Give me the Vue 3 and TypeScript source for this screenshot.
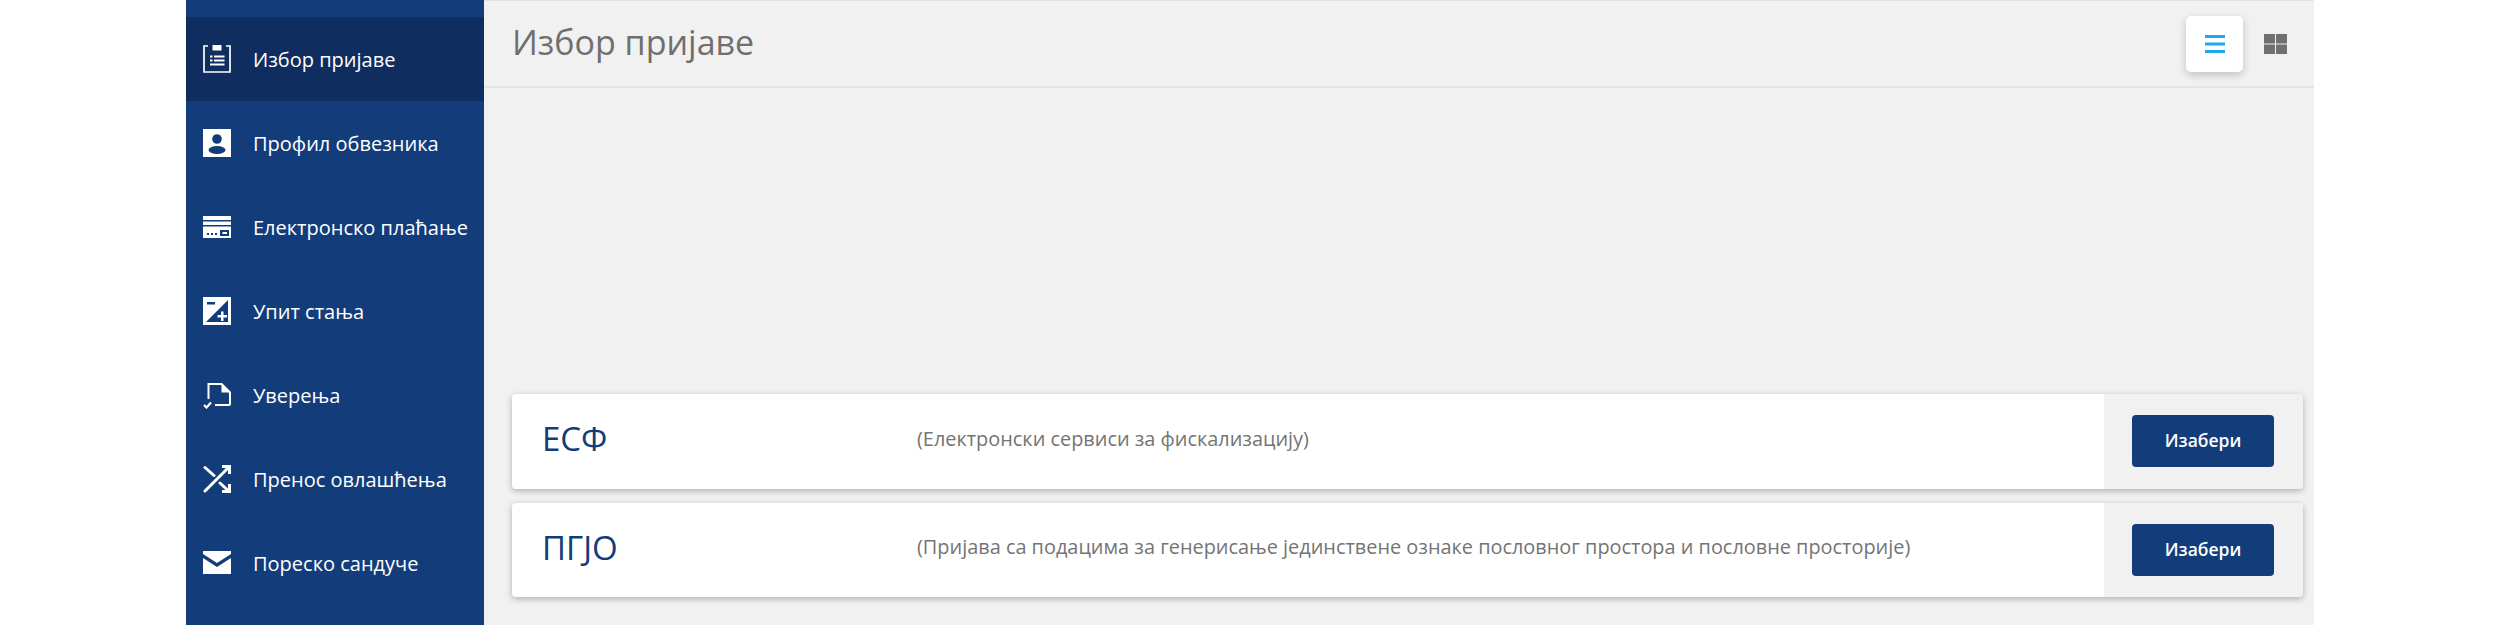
<template>
  <div class="page">
    <aside class="sidebar">
      <a v-for="item in navItems" :key="item.label" class="nav-item" :class="{ active: item.active }">
        <svg class="nav-icon" viewBox="0 0 28 28" v-html="item.icon"></svg>
        <span>{{ item.label }}</span>
      </a>
    </aside>
    <main class="main">
      <header class="topbar">
        <h1>Избор пријаве</h1>
        <div class="view-toggle">
          <button class="toggle-btn on" type="button">
            <svg width="20" height="18" viewBox="0 0 20 18"><path d="M0 0h20v3H0zM0 7.500h20v3H0zM0 15h20v3H0z" fill="#1ea7f2" /></svg>
          </button>
          <button class="toggle-btn" type="button">
            <svg width="23" height="20" viewBox="0 0 23 20"><path d="M0 0h11v9.500H0zM12 0h11v9.500H12zM0 10.500h11V20H0zM12 10.500h11V20H12z" fill="#6f6f6f" /></svg>
          </button>
        </div>
      </header>
      <section class="cards">
        <article v-for="card in cards" :key="card.name" class="card">
          <div class="card-name">{{ card.name }}</div>
          <div class="card-desc">{{ card.desc }}</div>
          <div class="card-action"><button type="button">Изабери</button></div>
        </article>
      </section>
    </main>
  </div>
</template>

<script setup lang="ts">
interface NavItem {
  label: string
  icon: string
  active?: boolean
}

const navItems: NavItem[] = [
  {
    label: 'Избор пријаве',
    active: true,
    icon: '<path fill="none" stroke="#fff" stroke-width="1.700" d="M5 1H1v26h26V1h-4"/><path fill="#fff" d="M9.500 0h9v5.500h-9zM7 10.500h2.500v2H7zM11 10.500h10.500v2H11zM7 14.500h2.500v2H7zM11 14.500h10.500v2H11zM7 18.500h14.500v2H7z"/>',
  },
  {
    label: 'Профил обвезника',
    icon: '<path fill="#fff" d="M0 0h28v28H0z"/><circle cx="14" cy="10" r="4.800" fill="#133d7a"/><ellipse cx="14" cy="21" rx="8.500" ry="4" fill="#133d7a"/>',
  },
  {
    label: 'Електронско плаћање',
    icon: '<path fill="#fff" d="M0 3h28v4H0zM0 8.500h28v3.500H0z"/><path fill="#fff" fill-rule="evenodd" d="M0 13.500h28V25H0zM17 17v6h9v-6z"/><path fill="#133d7a" d="M4 20h2v2H4zM8 20h2v2H8zM12 20h2v2h-2z"/><path fill="#fff" d="M19.500 19h4.500v2h-4.500z"/>',
  },
  {
    label: 'Упит стања',
    icon: '<path fill="#fff" d="M0 0h28v28H0z"/><path fill="#133d7a" d="M4 5h8v2.500H4zM3 25 25 3v22z"/><path fill="#fff" d="M18 14.500h2.500V18H24v2.500h-3.500V24H18v-3.500h-3.500V18H18z"/>',
  },
  {
    label: 'Уверења',
    icon: '<path fill="none" stroke="#fff" stroke-width="2" d="M5.500 18V3h13l8.500 8.500V23a1 1 0 0 1-1 1H12"/><path fill="#fff" d="M18.500 2 28 11.500h-9.500z"/><path fill="none" stroke="#fff" stroke-width="2.200" d="M1 24l2.500 2.500L8 21.500"/>',
  },
  {
    label: 'Пренос овлашћења',
    icon: '<path fill="none" stroke="#fff" stroke-width="3" stroke-linecap="round" d="M2 2.500l9 8M2 26 25 3M17 18l8 7.500"/><path fill="none" stroke="#fff" stroke-width="3" d="M19 1.500h7.500V9M26.500 19v7.500H19"/>',
  },
  {
    label: 'Пореско сандуче',
    icon: '<path fill="#fff" d="M0 2h28v3L14 14 0 5z"/><path fill="#fff" d="M0 9l14 9 14-9v16H0z"/>',
  },
]

const cards = [
  { name: 'ЕСФ', desc: '(Електронски сервиси за фискализацију)' },
  {
    name: 'ПГЈО',
    desc: '(Пријава са подацима за генерисање јединствене ознаке пословног простора и пословне просторије)',
  },
]
</script>

<style>
html,
body {
  background: #fff;
  overflow: hidden;
}
</style>

<style scoped>
.page {
  display: flex;
  height: 625px;
  padding: 0 186px;
  overflow: hidden;
  font-family: 'Open Sans', 'Noto Sans', sans-serif;
}

.sidebar {
  flex: 0 0 298px;
  padding-top: 17px;
  background: #133d7a;
}

.nav-item {
  display: flex;
  align-items: center;
  height: 84px;
  padding-left: 17px;
  color: #fff;
  font-size: 20px;
}

.nav-item.active {
  background: #0f2d5e;
}

.nav-icon {
  flex: none;
  width: 28px;
  height: 28px;
  margin-right: 22px;
}

.main {
  flex: 1;
  display: flex;
  flex-direction: column;
  background: #f1f1f1;
  border-top: 1px solid #e2e2e2;
}

.topbar {
  display: flex;
  align-items: center;
  justify-content: space-between;
  height: 85px;
  padding: 0 15px 0 28px;
  border-bottom: 2px solid #e4e4e4;
}

.topbar h1 {
  margin: 0 0 3px;
  color: #6f6f6f;
  font-size: 34px;
  font-weight: 400;
}

.view-toggle {
  display: flex;
  align-items: center;
  gap: 8px;
}

.toggle-btn {
  display: flex;
  align-items: center;
  justify-content: center;
  width: 48px;
  height: 56px;
  padding: 0;
  border: 0;
  background: none;
}

.toggle-btn.on {
  width: 57px;
  border-radius: 5px;
  background: #fff;
  box-shadow: 0 3px 8px rgba(0, 0, 0, 0.2);
}

.cards {
  display: flex;
  flex-direction: column;
  gap: 14px;
  margin-top: auto;
  padding: 0 11px 28px 28px;
}

.card {
  display: flex;
  align-items: center;
  height: 94.500px;
  border-radius: 4px;
  background: #fff;
  box-shadow: 0 2px 6px rgba(0, 0, 0, 0.28);
  overflow: hidden;
}

.card-name {
  box-sizing: border-box;
  flex: 0 0 405px;
  padding: 0 0 5px 30px;
  color: #133d7a;
  font-size: 33px;
}

.card-desc {
  flex: 1;
  padding-bottom: 6px;
  color: #747474;
  font-size: 19.900px;
}

.card-action {
  box-sizing: border-box;
  flex: 0 0 199px;
  display: flex;
  align-items: center;
  align-self: stretch;
  padding-left: 28px;
  background: #f1f1f1;
}

.card-action button {
  width: 142px;
  height: 52px;
  padding: 0 0 2px;
  border: 0;
  border-radius: 4px;
  background: #133d7a;
  color: #fff;
  font: 600 17.500px 'Open Sans', 'Noto Sans', sans-serif;
}
</style>
